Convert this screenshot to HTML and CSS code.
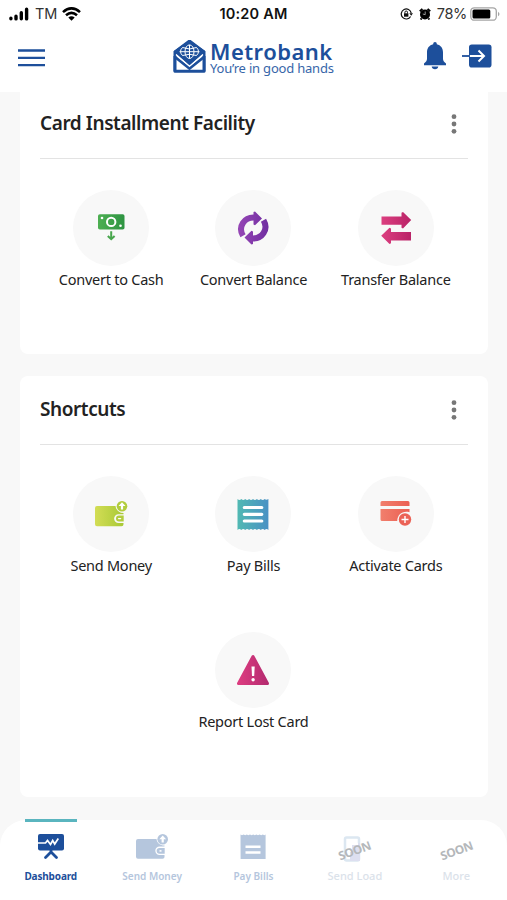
FILE: index.html
```html
<!DOCTYPE html>
<html lang="en">
<head>
    <meta charset="UTF-8">
    <meta name="viewport" content="width=device-width, initial-scale=1.0">
    <title>Metrobank</title>
    <link rel="stylesheet" href="styles.css">
</head>
<body>
    <div class="app">
        <header class="header">
            <div class="status">
                <div class="status-left">
                    <svg width="22" height="14" viewBox="0 0 22 14">
                        <path d="M1.9 11.3v.5M7 9.3v2.6M12.3 5.8v6M17.6 2.2v9.7" stroke="#000" stroke-width="3.4" stroke-linecap="round"/>
                    </svg>
                    <span class="carrier">TM</span>
                    <svg width="19" height="14" viewBox="0 0 19 14" fill="none" stroke="#000" stroke-width="2.6">
                        <path d="M1 5.1q8.500-7.500 17 0M4 8.300q5.500-4.800 11 0"/>
                        <path d="M6.300 10.600q3.200-2.800 6.400 0l-3.200 3.200z" fill="#000" stroke="none"/>
                    </svg>
                </div>
                <div class="time">10:20 AM</div>
                <div class="status-right">
                    <svg width="13" height="12" viewBox="0 0 13 12" fill="none" stroke="#111">
                        <path d="M10.600 8.500a5 5 0 1 1 .6-3.300" stroke-width="1.200"/>
                        <path d="M9.300 5.200h3.700l-1.800 2.500z" fill="#111" stroke="none"/>
                        <rect x="4" y="5.300" width="4.400" height="3.400" fill="#111" stroke="none"/>
                        <path d="M4.900 5.500V4.300a1.300 1.300 0 0 1 2.600 0v1.200"/>
                    </svg>
                    <svg width="12" height="12" viewBox="0 0 12 12">
                        <circle cx="6" cy="6.400" r="5" fill="#000"/>
                        <path d="M.8 3.300 3.400.9M11.200 3.300 8.600.9M2.600 10.300l-1 1.200M9.400 10.300l1 1.200" stroke="#000" stroke-width="1.900"/>
                        <path d="M6.200 3.500v3.200L3.800 6" fill="none" stroke="#bbb" stroke-width=".8"/>
                    </svg>
                    <span class="percent">78%</span>
                    <svg class="battery" width="30" height="14" viewBox="0 0 30 14">
                        <rect x=".8" y=".8" width="25.500" height="12.400" rx="3.500" fill="#fff" stroke="#a5a5a5" stroke-width="1.300"/>
                        <rect x="2.500" y="2.500" width="17.800" height="9" rx="1.500" fill="#000"/>
                        <path d="M28 4.700q3 2.300 0 4.600z" fill="#a5a5a5"/>
                    </svg>
                </div>
            </div>
            <div class="toolbar">
                <svg class="menu" width="27" height="18" viewBox="0 0 27 18">
                    <path d="M0 1.500h27M0 8.900h27M0 16.200h27" stroke="#1d4f9b" stroke-width="2.300"/>
                </svg>
                <div class="logo">
                    <svg width="33" height="34" viewBox="0 0 33 34">
                        <path d="M16.500 1 2 12v19.200h29V12z" fill="#fff" stroke="#1d4f9b" stroke-width="3" stroke-linejoin="round"/>
                        <path d="M16.500 1.200 1.800 11.500l14.700 13L31.200 11.500z" fill="#1d4f9b" stroke="#1d4f9b" stroke-width="2" stroke-linejoin="round"/>
                        <path d="M2 17 16.500 28.500 31 17" fill="none" stroke="#1d4f9b" stroke-width="2.800"/>
                        <path d="M3 14.500 16.500 26.300 30 14.500" fill="none" stroke="#fff" stroke-width="1.200"/>
                        <path d="M1.700 16v15.500M31.300 16v15.500" stroke="#1d4f9b" stroke-width="2.400"/>
                        <g fill="none" stroke="#fff" stroke-width="1">
                            <path d="M9.500 7.500q7 3 14 0M9.500 15.500q7-2.500 14 0M6.500 11.700h20"/>
                            <ellipse cx="16.500" cy="11.700" rx="4.500" ry="6.800"/>
                            <path d="M16.500 5v13.500M9.500 7.500q-4 4 0 8M23.500 7.500q4 4 0 8"/>
                        </g>
                    </svg>
                    <div class="brand">
                        <div class="brand-name">Metrobank</div>
                        <div class="brand-line">You’re in good hands</div>
                    </div>
                </div>
                <div class="actions">
                    <svg width="24" height="28" viewBox="0 0 24 28" fill="#1d4f9b">
                        <path d="M12 0a1.800 1.800 0 0 1 1.800 1.800v.5C17.800 3.200 20 6.300 20 10.500v6.300c0 1.800.9 3.200 3 4.700v1.700H1v-1.700c2.100-1.500 3-2.900 3-4.700v-6.300C4 6.300 6.200 3.200 10.200 2.300v-.5A1.800 1.800 0 0 1 12 0z"/>
                        <path d="M8.700 24.500h6.600c-.2 1.800-1.500 2.700-3.300 2.700s-3.100-.9-3.300-2.700z"/>
                    </svg>
                    <svg width="30" height="24" viewBox="0 0 30 24">
                        <rect x="7" y=".5" width="22.500" height="23" rx="2.800" fill="#1d4f9b"/>
                        <path d="M7 12h14.500M16.500 6.500 22 12l-5.500 5.500" fill="none" stroke="#fff" stroke-width="2"/>
                        <path d="M0 12h8" stroke="#1d4f9b" stroke-width="1.800"/>
                    </svg>
                </div>
            </div>
        </header>

        <main class="content">
            <section class="card card-first">
                <div class="card-head">
                    <h2>Card Installment Facility</h2>
                    <svg width="6" height="20" viewBox="0 0 6 20" fill="#777">
                        <circle cx="3" cy="2.700" r="2.400"/><circle cx="3" cy="10" r="2.400"/><circle cx="3" cy="17.300" r="2.400"/>
                    </svg>
                </div>
                <div class="tiles">
                    <div class="tile">
                        <div class="circle">
                            <svg width="34" height="34" viewBox="0 0 34 34">
                                <defs><linearGradient id="green"><stop stop-color="#4daf52"/><stop offset="1" stop-color="#2e9442"/></linearGradient></defs>
                                <rect x="4" y="3.200" width="26.500" height="15.300" rx="1.800" fill="url(#green)"/>
                                <circle cx="17.200" cy="10.900" r="4.200" fill="none" stroke="#fff" stroke-width="2"/>
                                <circle cx="8" cy="7" r="1.300" fill="#fff"/><circle cx="26.500" cy="14.700" r="1.300" fill="#fff"/>
                                <path d="M17.200 20.300v7.500M13.800 25l3.400 3.200 3.400-3.200" fill="none" stroke="#48a64d" stroke-width="2"/>
                            </svg>
                        </div>
                        <div class="tile-label">Convert to Cash</div>
                    </div>
                    <div class="tile">
                        <div class="circle">
                            <svg width="34" height="34" viewBox="0 0 34 34">
                                <defs><linearGradient id="purple" gradientUnits="userSpaceOnUse" x1="0" y1="0" x2="34" y2="0"><stop stop-color="#9848b7"/><stop offset="1" stop-color="#6f2da0"/></linearGradient></defs>
                                <g fill="none" stroke="url(#purple)" stroke-width="6">
                                    <path d="M18.500 6.600C8.500 6 1.500 15.500 7 24.800"/>
                                    <path d="M16 27.400C26 28 33 18.500 27.500 9.200"/>
                                </g>
                                <path d="M17.500 1 19 .6l7 6.800-7 6.800-1.500-.6zM17 20.400l-1.500-.6-7 6.800 7 6.800 1.500-.4z" fill="url(#purple)"/>
                            </svg>
                        </div>
                        <div class="tile-label">Convert Balance</div>
                    </div>
                    <div class="tile">
                        <div class="circle">
                            <svg width="34" height="34" viewBox="0 0 34 34">
                                <defs><linearGradient id="pink"><stop stop-color="#dc3f80"/><stop offset="1" stop-color="#b92367"/></linearGradient></defs>
                                <path d="M2.500 5.500h20V1.800l1.500-.8 8.200 8.100L24 17.500l-1.500-.8v-2.900h-20zM32 29.400h-20v2.900l-1.500.8-8.300-8.300 8.300-8 1.500.8v3.500h20z" fill="url(#pink)"/>
                            </svg>
                        </div>
                        <div class="tile-label">Transfer Balance</div>
                    </div>
                </div>
            </section>

            <section class="card card-shortcuts">
                <div class="card-head">
                    <h2>Shortcuts</h2>
                    <svg width="6" height="20" viewBox="0 0 6 20" fill="#777">
                        <circle cx="3" cy="2.700" r="2.400"/><circle cx="3" cy="10" r="2.400"/><circle cx="3" cy="17.300" r="2.400"/>
                    </svg>
                </div>
                <div class="tiles">
                    <div class="tile">
                        <div class="circle">
                            <svg width="34" height="34" viewBox="0 0 34 34">
                                <defs><linearGradient id="lime"><stop stop-color="#d3dd55"/><stop offset="1" stop-color="#a8c936"/></linearGradient></defs>
                                <path d="M3 9h18.500c.5 4 3.500 7 8 7v1.200h-5a4.400 4.400 0 0 0 0 8.800h5v1.200q0 2-2 2H3q-2 0-2-2V11q0-2 2-2z" fill="url(#lime)"/>
                                <path d="M25 18.600h4.700v6H25a3 3 0 0 1 0-6z" fill="#b2cd3d"/>
                                <path d="M24.600 21.600h2" stroke="#fff" stroke-width="1.400" stroke-linecap="round"/>
                                <circle cx="28" cy="9.200" r="5.300" fill="#b2cd3d"/>
                                <path d="m28 5.300 3.500 3.800h-2.400v3.500h-2.200V9.100h-2.400z" fill="#fff"/>
                            </svg>
                        </div>
                        <div class="tile-label">Send Money</div>
                    </div>
                    <div class="tile">
                        <div class="circle">
                            <svg width="34" height="34" viewBox="0 0 34 34">
                                <defs><linearGradient id="teal"><stop stop-color="#51b9b3"/><stop offset="1" stop-color="#4a91c4"/></linearGradient></defs>
                                <path d="M1.500 2q2 2 3.800 0q2 2 3.900 0q2 2 3.900 0q2 2 3.900 0q2 2 3.900 0q2 2 3.900 0q2 2 3.900 0q1.500 1.500 3.700 0v31q-1.800-2-3.700 0q-2-2-3.900 0q-2-2-3.900 0q-2-2-3.900 0q-2-2-3.900 0q-2-2-3.900 0q-2-2-3.900 0q-2-2-3.800 0z" fill="url(#teal)"/>
                                <path d="M8.300 10.500h17.500M8.300 17.300h17.500M8.300 24h17.500" stroke="#fff" stroke-width="3.200" stroke-linecap="round"/>
                            </svg>
                        </div>
                        <div class="tile-label">Pay Bills</div>
                    </div>
                    <div class="tile">
                        <div class="circle">
                            <svg width="34" height="34" viewBox="0 0 34 34">
                                <defs><linearGradient id="coral"><stop stop-color="#f17f6d"/><stop offset="1" stop-color="#eb5f53"/></linearGradient></defs>
                                <path d="M3 4h26q1.500 0 1.500 1.500V9h-29V5.500Q1.500 4 3 4zM1.500 12h29v3.300c-7-1.800-12 2.200-12.300 8.700H3q-1.500 0-1.500-1.500z" fill="url(#coral)"/>
                                <circle cx="26" cy="22.500" r="6.200" fill="#eb6256"/>
                                <path d="M26 19v7M22.500 22.500h7" stroke="#fff" stroke-width="1.400"/>
                            </svg>
                        </div>
                        <div class="tile-label">Activate Cards</div>
                    </div>
                    <div class="tile tile-lost">
                        <div class="circle">
                            <svg width="34" height="34" viewBox="0 0 34 34">
                                <defs><linearGradient id="rose"><stop stop-color="#dc3c80"/><stop offset="1" stop-color="#b52b70"/></linearGradient></defs>
                                <path d="M17 3.500 2.500 30.500h29z" fill="url(#rose)" stroke="url(#rose)" stroke-width="3" stroke-linejoin="round"/>
                                <path d="M15.500 13.500h3.200l-.5 9.500H16z" fill="#fff"/><circle cx="17.100" cy="26.800" r="1.700" fill="#fff"/>
                            </svg>
                        </div>
                        <div class="tile-label">Report Lost Card</div>
                    </div>
                </div>
            </section>
        </main>

        <nav class="nav">
            <div class="nav-item active">
                <svg width="34" height="30" viewBox="0 0 34 30">
                    <rect x="4" y="2" width="26" height="16.500" rx="2" fill="#1d4f9b"/>
                    <path d="M4 11h7.500l2-2.500 3 4 2.200-4 2 3.500L24.300 6.500" fill="none" stroke="#fff" stroke-width="1.700"/>
                    <path d="M17 17.500v3M17 20l-5.500 5.500M17 20l5.500 5.500" stroke="#1d4f9b" stroke-width="2.800" stroke-linecap="round"/>
                </svg>
                <span class="nav-label">Dashboard</span>
            </div>
            <div class="nav-item">
                <svg width="34" height="30" viewBox="0 0 34 30" fill="#b5c6dd">
                    <path d="M3 7h18.500c.5 4 3.500 6.500 8 6.500v1h-5a4.200 4.200 0 0 0 0 8.400h5V25q0 1.800-2 1.800H3q-2 0-2-2V9q0-2 2-2z"/>
                    <path d="M24.500 16h5.200v5.700h-5.200a2.800 2.800 0 0 1 0-5.700z"/>
                    <circle cx="27.700" cy="7.300" r="5.300"/>
                    <path d="m27.700 3.400 3.400 3.800h-2.300v3.300h-2.200V7.200h-2.300z" fill="#fff"/>
                    <path d="M24.500 18.900h2" stroke="#fff" stroke-width="1.600"/>
                </svg>
                <span class="nav-label">Send Money</span>
            </div>
            <div class="nav-item">
                <svg width="34" height="30" viewBox="0 0 34 30">
                    <path d="M4.500 2.500l1.500.7 1.600-.7 1.600.7 1.600-.7 1.600.7 1.600-.7 1.600.7 1.600-.7 1.600.7 1.600-.7 1.600.7 1.600-.7 1.600.7 1.600-.7 1.600.7 1.200-.7v24.400h-25z" fill="#b5c6dd"/>
                    <path d="M9.500 14.700h15M9.500 20.500h15" stroke="#fff" stroke-width="2.500"/>
                </svg>
                <span class="nav-label">Pay Bills</span>
            </div>
            <div class="nav-item muted">
                <svg width="34" height="30" viewBox="0 0 34 30">
                    <rect x="7" y="5.500" width="14" height="23" rx="1.500" fill="#fff" stroke="#dce7f1" stroke-width="2.500"/>
                    <rect x="12" y="11" width="10" height="18" fill="#dddff0"/>
                    <path d="M13 20v-8h7" fill="none" stroke="#fff" stroke-width="2"/>
                </svg>
                <span class="soon">SOON</span>
                <span class="nav-label load">Send Load</span>
            </div>
            <div class="nav-item muted">
                <svg width="34" height="30" viewBox="0 0 34 30"></svg>
                <span class="soon">SOON</span>
                <span class="nav-label load">More</span>
            </div>
        </nav>
    </div>
</body>
</html>
```

FILE: styles.css
```css
* {
    box-sizing: border-box;
}
body {
    margin: 0;
    background-color: #f8f8f8;
    font-family: 'Noto Sans', sans-serif;
    color: #222;
}
svg {
    display: block;
    flex-shrink: 0;
}
.app {
    width: 507px;
    height: 900px;
    display: flex;
    flex-direction: column;
    overflow: hidden;
}
.header {
    height: 92px;
    flex-shrink: 0;
    background-color: #fff;
}
.status {
    height: 27px;
    padding: 0 7px 0 9px;
    display: grid;
    grid-template-columns: 1fr 80px 1fr;
    align-items: center;
    font-family: Inter, sans-serif;
}
.status-left, .status-right {
    display: flex;
    align-items: center;
}
.carrier {
    margin: 0 5px 0 4px;
    font-size: 14.5px;
    color: #333;
}
.time {
    margin-left: -2px;
    text-align: center;
    font-size: 14.5px;
    font-weight: 600;
    letter-spacing: 0.2px;
    color: #111;
    white-space: nowrap;
}
.status-right {
    justify-content: flex-end;
    gap: 6px;
}
.percent {
    font-size: 14.5px;
    color: #333;
    letter-spacing: -0.3px;
}
.battery {
    margin-left: -3px;
}
.toolbar {
    height: 60px;
    padding: 1px 15px 0 18px;
    display: grid;
    grid-template-columns: 1fr 164px 1fr;
    align-items: center;
}
.logo {
    display: flex;
    gap: 4px;
    padding-bottom: 2px;
}
.brand {
    color: #1d4f9b;
    white-space: nowrap;
}
.brand-name {
    font-size: 22px;
    font-weight: 600;
    line-height: 22px;
    letter-spacing: 0.45px;
}
.brand-line {
    font-size: 13px;
    line-height: 12px;
    letter-spacing: -0.2px;
    color: #3766a9;
}
.actions {
    display: flex;
    justify-content: flex-end;
    align-items: center;
    gap: 15px;
    padding-bottom: 3px;
}
.content {
    padding: 0 19px 0 20px;
    flex: 1;
}
.card {
    padding: 0 20px;
    background-color: #fff;
    border-radius: 8px;
}
.card-first {
    height: 262px;
    border-radius: 0 0 8px 8px;
}
.card-shortcuts {
    height: 421px;
    margin-top: 22px;
}
.card-head {
    height: 67px;
    padding: 0 11.5px 2px 0;
    display: flex;
    align-items: center;
    justify-content: space-between;
    border-bottom: 1px solid #e3e3e3;
}
.card-shortcuts .card-head {
    height: 69px;
    padding-bottom: 0;
}
h2 {
    margin: -2px 0 0;
    font-size: 19px;
    font-weight: 600;
    letter-spacing: -0.42px;
    white-space: nowrap;
}
.tiles {
    padding-top: 31px;
    margin-right: 1px;
    display: grid;
    grid-template-columns: repeat(3, 1fr);
    row-gap: 56px;
}
.tile {
    height: 100px;
    display: flex;
    flex-direction: column;
    align-items: center;
}
.tile-lost {
    grid-column: 2;
}
.circle {
    width: 76px;
    height: 76px;
    border-radius: 50%;
    background-color: #f8f8f8;
    display: flex;
    align-items: center;
    justify-content: center;
}
.tile-label {
    margin-top: 3px;
    font-size: 14.5px;
    line-height: 20px;
    letter-spacing: -0.25px;
    white-space: nowrap;
}
.nav {
    height: 80px;
    flex-shrink: 0;
    display: grid;
    grid-template-columns: repeat(5, 1fr);
    background-color: #fff;
    border-radius: 26px 26px 0 0;
}
.nav-item {
    position: relative;
    padding-top: 12px;
    display: flex;
    flex-direction: column;
    align-items: center;
    color: #b5c6dd;
}
.nav-label {
    margin-top: 6px;
    font-size: 10px;
    font-weight: 600;
    line-height: 16px;
    white-space: nowrap;
}
.active {
    color: #1d4f9b;
}
.active::before {
    content: "";
    position: absolute;
    top: -1px;
    width: 52px;
    height: 3px;
    background-color: #5ab5bf;
}
.active .nav-label {
    font-weight: 700;
    letter-spacing: -0.15px;
}
.muted {
    color: #dbe2ea;
}
.load {
    font-size: 11px;
    font-weight: 500;
}
.soon {
    position: absolute;
    top: 22px;
    font-size: 12px;
    font-weight: 700;
    line-height: 18px;
    letter-spacing: -0.5px;
    color: #b4b7ba;
    transform: rotate(-20deg);
}
```
